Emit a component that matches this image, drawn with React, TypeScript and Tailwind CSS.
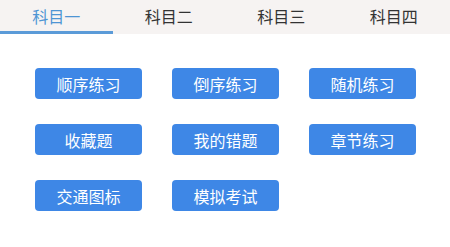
const tabs = ['科目一', '科目二', '科目三', '科目四']
const items = ['顺序练习', '倒序练习', '随机练习', '收藏题', '我的错题', '章节练习', '交通图标', '模拟考试']

export default function App() {
  return (
    <div className="w-[450px] h-[247px] bg-white font-['Noto_Sans_CJK_SC',sans-serif]">
      {/* Tabs */}
      <div className="flex h-[34px] bg-[#f6f3f2]">
        {tabs.map((t, i) => (
          <div
            key={t}
            className={
              i === 0
                ? 'flex-1 flex items-center justify-center text-[16px] text-[#4e95d4] border-b-[3px] border-[#5b9bd8] pt-[3px] pb-[2px]'
                : 'flex-1 flex items-center justify-center text-[16px] text-[#333] pb-[2px]'
            }
          >
            {t}
          </div>
        ))}
      </div>

      {/* Buttons */}
      <div className="grid grid-cols-[107px_107px_107px] gap-x-[30px] gap-y-[25px] pl-[35px] pt-[34px]">
        {items.map((it) => (
          <button
            key={it}
            className="h-[31px] rounded-[4px] bg-[#3e87e6] text-white text-[16px] flex items-center justify-center"
          >
            {it}
          </button>
        ))}
      </div>
    </div>
  )
}
